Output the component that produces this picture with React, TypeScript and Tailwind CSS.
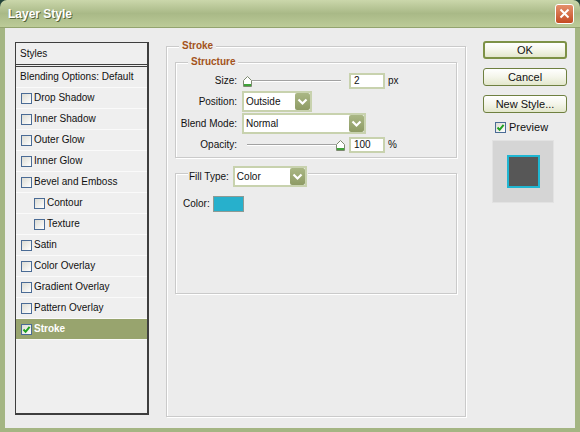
import React from 'react';

type StyleItem = { label: string; sub?: boolean; checked?: boolean; active?: boolean };

const styleItems: StyleItem[] = [
  { label: 'Drop Shadow' },
  { label: 'Inner Shadow' },
  { label: 'Outer Glow' },
  { label: 'Inner Glow' },
  { label: 'Bevel and Emboss' },
  { label: 'Contour', sub: true },
  { label: 'Texture', sub: true },
  { label: 'Satin' },
  { label: 'Color Overlay' },
  { label: 'Gradient Overlay' },
  { label: 'Pattern Overlay' },
  { label: 'Stroke', checked: true, active: true },
];

const Checkbox = ({ checked }: { checked?: boolean }) => (
  <span className="w-[11px] h-[11px] shrink-0 border border-[#4a6b95] bg-gradient-to-br from-[#dcdcd4] to-white flex items-center justify-center">
    {checked && (
      <svg width="9" height="9" viewBox="0 0 9 9">
        <path d="M1.5 4.5 L3.6 6.8 L7.6 1.8" fill="none" stroke="#21a121" strokeWidth="2" />
      </svg>
    )}
  </span>
);

const Chevron = () => (
  <svg width="11" height="8" viewBox="0 0 11 8">
    <path d="M1.5 1.5 L5.5 5.5 L9.5 1.5" fill="none" stroke="#ffffff" strokeWidth="2.2" />
  </svg>
);

const Dropdown = ({ value, className }: { value: string; className: string }) => (
  <div className={`${className} h-[21px] flex items-center border-2 border-[#c8d2ae] bg-white pl-[2px]`}>
    <span className="flex-1 text-[10px] leading-none">{value}</span>
    <span className="w-[15px] h-[17px] rounded-[2px] bg-gradient-to-b from-[#aab785] to-[#8e9b65] flex items-center justify-center">
      <Chevron />
    </span>
  </div>
);

const NumberBox = ({ value, className }: { value: string; className?: string }) => (
  <div className={`${className ?? ''} w-[36px] h-[16px] border-2 border-[#c8d2ae] bg-white pl-[3px] flex items-center text-[10px] leading-none`}>
    {value}
  </div>
);

const Thumb = () => (
  <svg width="9" height="11" viewBox="0 0 9 11" className="shrink-0">
    <path d="M0.5 4.5 L4.5 0.5 L8.5 4.5 L8.5 10.5 L0.5 10.5 Z" fill="#ffffff" stroke="#7d8a70" />
    <rect x="1" y="8" width="7" height="2" fill="#3fa33a" />
  </svg>
);

const Track = () => <div className="flex-1 h-[2px] border-t border-[#a2a2a2] border-b border-b-white" />;

const Label = ({ children }: { children: React.ReactNode }) => (
  <span className="w-[61px] text-right text-[10px] leading-none">{children}</span>
);

// brown caption sitting on a group box's top line
const GroupTitle = ({ children, className }: { children: React.ReactNode; className: string }) => (
  <div className={`${className} -mt-[7px] px-[3px] w-fit bg-[#ececec] text-[10px] leading-[12px] font-bold text-[#a3531b]`}>
    {children}
  </div>
);

const Button = ({ children, primary }: { children: React.ReactNode; primary?: boolean }) => (
  <div
    className={`w-[84px] h-[18px] rounded-[3px] flex items-center justify-center text-[11px] leading-none bg-gradient-to-b from-white via-[#f4f5ea] to-[#e3e7cc] ${
      primary ? 'border-2 border-[#7d9146]' : 'border border-[#6f8040]'
    }`}
  >
    {children}
  </div>
);

export default function App() {
  return (
    <div className="w-[580px] h-[432px] bg-[#24443a] font-['Liberation_Sans',Arial,sans-serif] text-[#111] select-none">
      <div className="flex flex-col w-full h-full">
        {/* title bar */}
        <div className="h-[28px] shrink-0 rounded-t-[7px] bg-gradient-to-b from-[#cbd7ab] via-[#a9b987] to-[#bccb98] border-b border-[#93a36f] flex items-center justify-between pl-[8px] pr-[6px]">
          <span className="text-[12px] font-bold text-white [text-shadow:1px_1px_0_#56643a]">Layer Style</span>
          <span className="w-[19px] h-[20px] rounded-[3px] border border-white bg-gradient-to-b from-[#e4906a] to-[#c44a22] flex items-center justify-center">
            <svg width="11" height="11" viewBox="0 0 11 11">
              <path d="M1.5 1.5 L9.5 9.5 M9.5 1.5 L1.5 9.5" stroke="#ffffff" strokeWidth="2" />
            </svg>
          </span>
        </div>

        {/* dialog body */}
        <div className="flex-1 flex items-start bg-[#ececec] border-l-[5px] border-r-[5px] border-b-[4px] border-[#a4b583] pl-[10px] pt-[14px]">
          {/* styles list */}
          <div className="w-[134px] h-[373px] shrink-0 bg-[#efefef] border border-[#3e3e3e] border-r-2 border-b-2 flex flex-col text-[10px] leading-none">
            <div className="h-[24px] shrink-0 flex items-center pl-[4px] border-b-[3px] border-double border-[#3e3e3e]">Styles</div>
            <div className="h-[21px] shrink-0 flex items-center pl-[4px] border-b border-[#fafafa]">Blending Options: Default</div>
            {styleItems.map((item) => (
              <div
                key={item.label}
                className={`h-[21px] shrink-0 flex items-center gap-[2px] border-b border-[#fafafa] ${item.sub ? 'pl-[18px]' : 'pl-[5px]'} ${
                  item.active ? 'bg-[#98a46e] text-white font-bold' : ''
                }`}
              >
                <Checkbox checked={item.checked} />
                <span>{item.label}</span>
              </div>
            ))}
          </div>

          {/* stroke settings */}
          <div className="ml-[17px] mt-[4px] w-[300px] h-[371px] shrink-0 border border-[#cacaca] shadow-[inset_1px_1px_0_#ffffff,1px_1px_0_#ffffff] px-[8px]">
            <GroupTitle className="ml-[4px]">Stroke</GroupTitle>

            <div className="mt-[10px] border border-[#cacaca] shadow-[inset_1px_1px_0_#ffffff,1px_1px_0_#ffffff] pb-[4px]">
              <GroupTitle className="ml-[12px]">Structure</GroupTitle>

              <div className="mt-[5px] h-[16px] flex items-center">
                <Label>Size:</Label>
                <div className="ml-[6px] w-[98px] flex items-center">
                  <Thumb />
                  <Track />
                </div>
                <NumberBox value="2" className="ml-[8px]" />
                <span className="ml-[3px] text-[10px] leading-none">px</span>
              </div>

              <div className="mt-[2px] flex items-center">
                <Label>Position:</Label>
                <Dropdown value="Outside" className="ml-[5px] w-[70px]" />
              </div>

              <div className="mt-[1px] flex items-center">
                <Label>Blend Mode:</Label>
                <Dropdown value="Normal" className="ml-[5px] w-[124px]" />
              </div>

              <div className="mt-[3px] h-[16px] flex items-center">
                <Label>Opacity:</Label>
                <div className="ml-[10px] w-[98px] flex items-center">
                  <Track />
                  <Thumb />
                </div>
                <NumberBox value="100" className="ml-[4px]" />
                <span className="ml-[3px] text-[10px] leading-none">%</span>
              </div>
            </div>

            <div className="mt-[15px] h-[121px] border border-[#cacaca] shadow-[inset_1px_1px_0_#ffffff,1px_1px_0_#ffffff]">
              <div className="-mt-[8px] ml-[12px] px-[1px] w-fit bg-[#ececec] flex items-center gap-[4px]">
                <span className="text-[10px] leading-none">Fill Type:</span>
                <Dropdown value="Color" className="w-[74px]" />
              </div>
              <div className="mt-[9px] ml-[7px] flex items-center gap-[3px]">
                <span className="text-[10px] leading-none">Color:</span>
                <span className="w-[31px] h-[16px] border border-[#8d9a94] bg-[#27b0cc]" />
              </div>
            </div>
          </div>

          {/* buttons and preview */}
          <div className="ml-[17px] -mt-[1px] flex flex-col">
            <Button primary>OK</Button>
            <div className="mt-[9px]">
              <Button>Cancel</Button>
            </div>
            <div className="mt-[9px]">
              <Button>New Style...</Button>
            </div>
            <div className="mt-[9px] pl-[12px] flex items-center gap-[3px]">
              <Checkbox checked />
              <span className="text-[11px] leading-none">Preview</span>
            </div>
            <div className="mt-[7px] ml-[9px] w-[62px] h-[63px] bg-[#d5d5d5] border border-[#e2e2e2] flex items-center justify-center">
              <div className="w-[33px] h-[33px] bg-[#575757] border-2 border-[#1fb6d2]" />
            </div>
          </div>
        </div>
      </div>
    </div>
  );
}
